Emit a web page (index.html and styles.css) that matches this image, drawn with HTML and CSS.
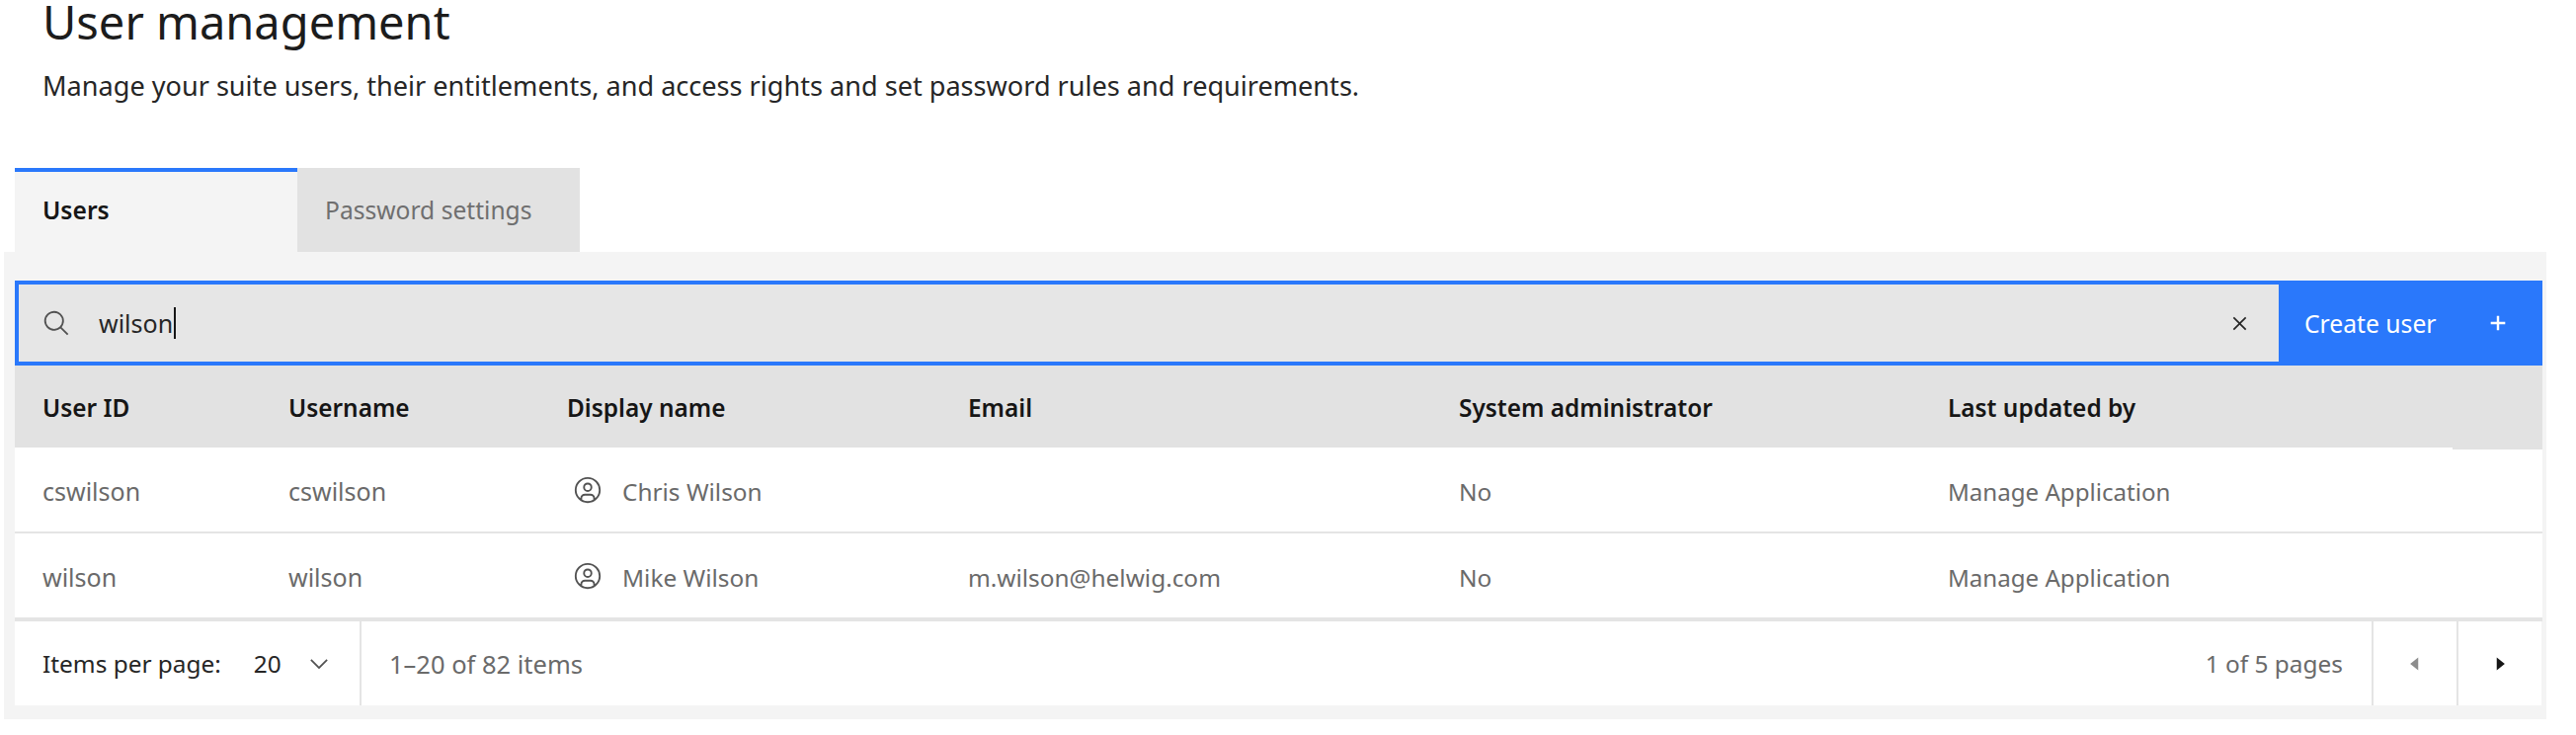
FILE: index.html
```html
<!DOCTYPE html>
<html lang="en">
<head>
<meta charset="utf-8">
<title>User management</title>
<link rel="stylesheet" href="styles.css">
</head>
<body>
<header class="page-head">
  <h1 class="title">User management</h1>
  <p class="desc">Manage your suite users, their entitlements, and access rights and set password rules and requirements.</p>
</header>
<nav class="tabs">
  <div class="tab tab-active">Users</div>
  <div class="tab tab-idle">Password settings</div>
</nav>
<section class="panel">
  <div class="toolbar">
    <div class="search">
      <svg class="ico-search" viewBox="0 0 32 32"><path d="M29 27.586l-7.552-7.552a11.018 11.018 0 1 0-1.414 1.414L27.586 29zM4 13a9 9 0 1 1 9 9 9.01 9.01 0 0 1-9-9z"/></svg>
      <span class="search-text">wilson</span><span class="caret"></span>
      <svg class="ico-close" viewBox="0 0 32 32"><path d="M24 9.4L22.6 8 16 14.6 9.4 8 8 9.4 14.6 16 8 22.6 9.4 24 16 17.4 22.6 24 24 22.6 17.4 16 24 9.4z"/></svg>
    </div>
    <button class="create">Create user<svg class="ico-plus" viewBox="0 0 32 32"><path d="M17.5 14.5V7h-3v7.5H7v3h7.5V25h3v-7.5H25v-3h-7.5z"/></svg></button>
  </div>
  <div class="row row-head">
    <div class="c1">User ID</div><div class="c2">Username</div><div class="c3">Display name</div><div class="c4">Email</div><div class="c5">System administrator</div><div class="c6">Last updated by</div>
  </div>
  <div class="row row-body">
    <div class="c1">cswilson</div><div class="c2">cswilson</div>
    <div class="c3 name"><svg class="ico-user" viewBox="0 0 32 32"><path d="M16 8a5 5 0 1 0 5 5 5 5 0 0 0-5-5zm0 8a3 3 0 1 1 3-3 3.003 3.003 0 0 1-3 3z"/><path d="M16 2a14 14 0 1 0 14 14A14.016 14.016 0 0 0 16 2zm-6 24.377V25a3.003 3.003 0 0 1 3-3h6a3.003 3.003 0 0 1 3 3v1.377a11.899 11.899 0 0 1-12 0zm13.993-1.451A5.002 5.002 0 0 0 19 20h-6a5.002 5.002 0 0 0-4.992 4.926 12 12 0 1 1 15.985 0z"/></svg>Chris Wilson</div>
    <div class="c4"></div><div class="c5">No</div><div class="c6">Manage Application</div>
  </div>
  <div class="row row-body row-last">
    <div class="c1">wilson</div><div class="c2">wilson</div>
    <div class="c3 name"><svg class="ico-user" viewBox="0 0 32 32"><path d="M16 8a5 5 0 1 0 5 5 5 5 0 0 0-5-5zm0 8a3 3 0 1 1 3-3 3.003 3.003 0 0 1-3 3z"/><path d="M16 2a14 14 0 1 0 14 14A14.016 14.016 0 0 0 16 2zm-6 24.377V25a3.003 3.003 0 0 1 3-3h6a3.003 3.003 0 0 1 3 3v1.377a11.899 11.899 0 0 1-12 0zm13.993-1.451A5.002 5.002 0 0 0 19 20h-6a5.002 5.002 0 0 0-4.992 4.926 12 12 0 1 1 15.985 0z"/></svg>Mike Wilson</div>
    <div class="c4">m.wilson@helwig.com</div><div class="c5">No</div><div class="c6">Manage Application</div>
  </div>
  <footer class="pager">
    <div class="per-page"><span class="per-label">Items per page:</span><span class="per-value">20</span><svg class="ico-chev" viewBox="0 0 16 16"><path d="M8 11L3 6l.7-.7L8 9.6l4.3-4.3.7.7z"/></svg></div>
    <div class="range">1–20 of 82 items</div>
    <div class="pages">1 of 5 pages</div>
    <div class="nav-btn nav-off"><svg class="ico-tri" viewBox="0 0 32 32"><path d="M20 24l-10-8 10-8z"/></svg></div>
    <div class="nav-btn"><svg class="ico-tri" viewBox="0 0 32 32"><path d="M12 8l10 8-10 8z"/></svg></div>
  </footer>
</section>
</body>
</html>
```
FILE: styles.css
```css
* { box-sizing: border-box; }
html, body { margin: 0; padding: 0; background: #fff; }
body { font-family: "Noto Sans", "Liberation Sans", sans-serif; font-size: 24.4px; color: #161616; height: 744px; overflow: hidden; }
.page-head { padding: 2px 0 0 43px; height: 170px; }
.title { margin: 0; font-weight: 400; font-size: 47px; line-height: 40px; color: #1c1c1c; }
.desc { margin: 0; padding-top: 25px; font-size: 27.1px; line-height: 40px; color: #262626; }
.tabs { display: flex; padding-left: 15px; height: 85px; }
.tab { width: 286px; padding-left: 28px; display: flex; align-items: center; font-size: 24.6px; }
.tab-active { background: #f4f4f4; border-top: 4px solid #2a78fb; font-weight: 600; padding-bottom: 4px; }
.tab-idle { background: #e2e2e2; color: #6f6f6f; }
.panel { margin-left: 4px; width: 2574px; height: 473px; background: #f4f4f4; padding: 29px 4px 0 11px; }
.toolbar { display: flex; height: 86px; }
.search { flex: 1; background: #e6e6e6; border: 4px solid #2a78fb; border-right: 0; display: flex; align-items: center; padding: 0 26px 0 24px; }
.ico-search { width: 29px; height: 29px; fill: #525252; flex: none; }
.search-text { margin-left: 28px; color: #262626; font-size: 25px; }
.caret { width: 2px; height: 32px; background: #161616; margin-left: 1px; flex: none; }
.ico-close { width: 27px; height: 27px; fill: #262626; margin-left: auto; flex: none; }
.create { width: 267px; border: 0; background: #2a78fb; color: #fff; font: inherit; font-size: 24.7px; display: flex; align-items: center; justify-content: space-between; padding: 0 32px 0 26px; }
.ico-plus { width: 26px; height: 26px; fill: #fff; flex: none; }
.row { display: flex; align-items: center; height: 87px; }
.row > div { flex: none; }
.row-head { background: #e2e2e2; height: 83px; font-weight: 600; position: relative; z-index: 1; padding-top: 2px; }
.row-head::after { content: ""; position: absolute; right: 0; bottom: -2px; width: 91px; height: 2px; background: #e2e2e2; }
.row-body { background: #fff; color: #6a6a6a; border-bottom: 2px solid #e4e4e4; padding-top: 3px; }
.row-last { border-bottom: 4px solid #e4e4e4; height: 89px; }
.c1 { width: 249px; padding-left: 28px; }
.c2 { width: 282px; padding-left: 28px; }
.c3 { width: 406px; padding-left: 28px; }
.c4 { width: 497px; padding-left: 28px; }
.c5 { width: 495px; padding-left: 28px; }
.c6 { padding-left: 28px; }
.row-body .c1, .row-body .c2 { font-size: 25px; }
.row-body .c6 { font-size: 24.1px; }
.name { display: flex; align-items: center; }
.ico-user { width: 30px; height: 30px; fill: #525252; margin: -3px 20px 0 6px; flex: none; }
.pager { display: flex; align-items: center; height: 85px; background: #fff; width: 2558px; }
.per-page { display: flex; align-items: center; width: 351px; height: 100%; padding-left: 28px; border-right: 2px solid #e4e4e4; }
.per-label { color: #262626; }
.per-value { margin-left: 33px; color: #262626; }
.ico-chev { width: 28px; height: 28px; fill: #525252; margin-left: 24px; flex: none; }
.range { padding-left: 28px; color: #6a6a6a; flex: 1; font-size: 25.5px; }
.pages { color: #6a6a6a; padding-right: 29px; }
.nav-btn { width: 86px; height: 100%; border-left: 2px solid #e4e4e4; display: flex; align-items: center; justify-content: center; }
.ico-tri { width: 26px; height: 26px; fill: #161616; }
.nav-off .ico-tri { fill: #8d8d8d; }
```
